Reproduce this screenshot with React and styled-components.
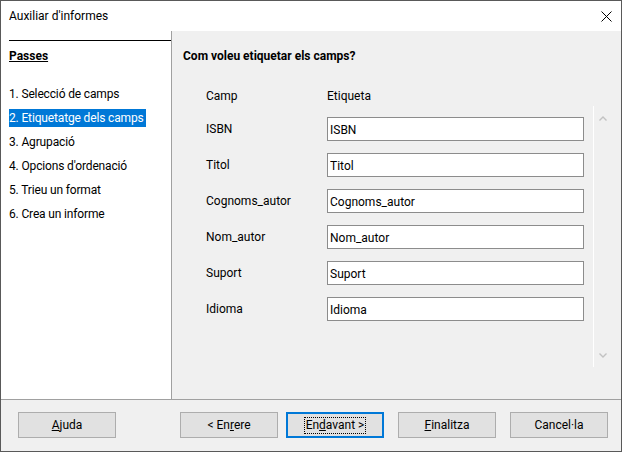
import React from 'react';
import styled, { createGlobalStyle } from 'styled-components';

const steps = [
  '1. Selecció de camps',
  '2. Etiquetatge dels camps',
  '3. Agrupació',
  "4. Opcions d'ordenació",
  '5. Trieu un format',
  '6. Crea un informe',
];

const fields = ['ISBN', 'Titol', 'Cognoms_autor', 'Nom_autor', 'Suport', 'Idioma'];

const GlobalStyle = createGlobalStyle`
  body {
    margin: 0;
    background: #ffffff;
  }
  * {
    box-sizing: border-box;
  }
`;

const Window = styled.div`
  width: 622px;
  height: 452px;
  border: 1px solid #595959;
  display: flex;
  flex-direction: column;
  font-family: Roboto, 'Liberation Sans', sans-serif;
  font-size: 12px;
  color: #000;
  background: #f0f0f0;
`;

const TitleBar = styled.div`
  height: 30px;
  flex: none;
  background: #fff;
  display: flex;
  align-items: center;
  justify-content: space-between;
  padding: 0 9px 0 8px;
`;

const Body = styled.div`
  height: 368px;
  flex: none;
  display: flex;
`;

/* left list of steps */
const Sidebar = styled.nav`
  width: 171px;
  flex: none;
  background: #fff;
  border-right: 1px solid #a0a0a0;
  padding: 9px 0 0 8px;
`;

const SidebarHeader = styled.div`
  border-top: 1px solid #000;
  padding-top: 7px;
  line-height: 16px;
  font-weight: bold;
  text-decoration: underline;
`;

const StepList = styled.ul`
  list-style: none;
  margin: 21px 0 0;
  padding: 0;
  display: flex;
  flex-direction: column;
  gap: 6px;
  letter-spacing: -0.15px;
`;

const Step = styled.li`
  line-height: 18px;
  height: 18px;
  span {
    display: inline-block;
    padding-right: 2px;
    background: ${(p) => (p.$active ? '#0078d7' : 'transparent')};
    color: ${(p) => (p.$active ? '#fff' : '#000')};
  }
`;

const Main = styled.section`
  flex: 1;
  display: flex;
  flex-direction: column;
  padding: 17px 10px 0 11px;
`;

const Heading = styled.div`
  font-weight: bold;
  line-height: 16px;
`;

const FieldGrid = styled.div`
  display: grid;
  grid-template-columns: 121px 257px;
  align-items: center;
`;

const HeaderRow = styled(FieldGrid)`
  margin: 24px 0 0 23px;
  line-height: 16px;
`;

const ScrollArea = styled.div`
  margin-top: 2px;
  height: 261px;
  display: flex;
`;

const Rows = styled(FieldGrid)`
  padding: 11px 0 0 23px;
  row-gap: 12px;
  align-content: start;
`;

const Label = styled.span`
  line-height: 16px;
`;

const TextBox = styled.input`
  height: 24px;
  width: 257px;
  border: 1px solid #8c8c8c;
  background: #fff;
  padding: 1px 2px 0;
  font: inherit;
  color: #000;
  outline: none;
`;

const Scrollbar = styled.div`
  width: 17px;
  margin-left: 9px;
  border-left: 1px solid #fff;
  display: flex;
  flex-direction: column;
  justify-content: space-between;
  align-items: center;
  padding: 10px 0 9px 1px;
`;

const Footer = styled.footer`
  flex: 1;
  border-top: 1px solid #a0a0a0;
  display: flex;
  align-items: flex-start;
  padding: 12px 13px 0 17px;
`;

const ButtonGroup = styled.div`
  margin-left: auto;
  display: flex;
`;

const Button = styled.button`
  width: 98px;
  height: 26px;
  margin-left: ${(p) => p.$gap || 0}px;
  border: ${(p) => (p.$focused ? '2px solid #0078d7' : '1px solid #adadad')};
  background: #e1e1e1;
  font: inherit;
  color: #000;
  padding: 0;
  display: flex;
  align-items: center;
  justify-content: center;
`;

const FocusRing = styled.span`
  border: 1px dotted #000;
  padding: 0 1px;
  line-height: 15px;
`;

const CloseIcon = () => (
  <svg width="11" height="11" viewBox="0 0 11 11">
    <path d="M0.5 0.5 L10.5 10.5 M10.5 0.5 L0.5 10.5" stroke="#000" strokeWidth="1" fill="none" />
  </svg>
);

const Chevron = ({ up }) => (
  <svg width="8" height="5" viewBox="0 0 8 5">
    <path
      d={up ? 'M0.5 4.5 L4 1 L7.5 4.5' : 'M0.5 0.5 L4 4 L7.5 0.5'}
      stroke="#c2c2c2"
      strokeWidth="1.4"
      fill="none"
    />
  </svg>
);

export default function App() {
  return (
    <>
      <GlobalStyle />
      <Window>
        <TitleBar>
          <span>Auxiliar d'informes</span>
          <CloseIcon />
        </TitleBar>
        <Body>
          <Sidebar>
            <SidebarHeader>Passes</SidebarHeader>
            <StepList>
              {steps.map((s, i) => (
                <Step key={s} $active={i === 1}>
                  <span>{s}</span>
                </Step>
              ))}
            </StepList>
          </Sidebar>
          <Main>
            <Heading>Com voleu etiquetar els camps?</Heading>
            <HeaderRow>
              <span>Camp</span>
              <span>Etiqueta</span>
            </HeaderRow>
            <ScrollArea>
              <Rows>
                {fields.map((f) => (
                  <React.Fragment key={f}>
                    <Label>{f}</Label>
                    <TextBox readOnly defaultValue={f} />
                  </React.Fragment>
                ))}
              </Rows>
              <Scrollbar>
                <Chevron up />
                <Chevron />
              </Scrollbar>
            </ScrollArea>
          </Main>
        </Body>
        <Footer>
          <Button>
            <span><u>A</u>juda</span>
          </Button>
          <ButtonGroup>
            <Button>
              <span>&lt; En<u>r</u>ere</span>
            </Button>
            <Button $gap={8} $focused>
              <FocusRing>En<u>d</u>avant &gt;</FocusRing>
            </Button>
            <Button $gap={14}>
              <span><u>F</u>inalitza</span>
            </Button>
            <Button $gap={14}>
              <span>Cancel·la</span>
            </Button>
          </ButtonGroup>
        </Footer>
      </Window>
    </>
  );
}
